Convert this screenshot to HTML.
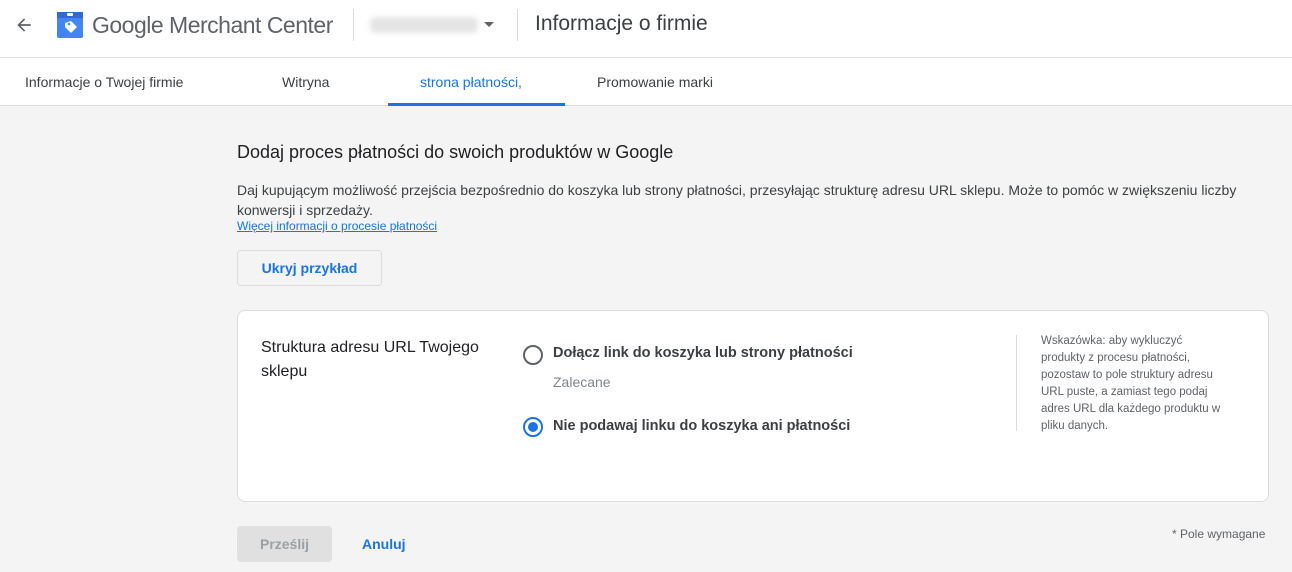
<!DOCTYPE html>
<html><head><meta charset="utf-8"><style>
*{margin:0;padding:0;box-sizing:border-box}
body{width:1292px;height:572px;overflow:hidden;background:#f4f4f4;font-family:"Liberation Sans",sans-serif;color:#202124;position:relative}
.abs{position:absolute}
.top{position:absolute;left:0;top:0;width:1292px;height:106px;background:#fff;border-bottom:1px solid #dadce0}
.sep1{position:absolute;left:0;top:57px;width:1292px;height:1px;background:#e0e0e0}
.tab{position:absolute;top:74px;font-size:14px;color:#3c4043}
</style></head><body>
<div class="top"></div>
<div class="sep1"></div>
<svg class="abs" style="left:14px;top:15px" width="20" height="20" viewBox="0 0 24 24"><path d="M20 11H7.8l5.6-5.6L12 4l-8 8 8 8 1.4-1.4L7.8 13H20z" fill="#5f6368"/></svg>
<svg class="abs" style="left:56px;top:11px" width="28" height="28" viewBox="0 0 28 28"><rect x="1" y="1" width="26" height="26" rx="2" fill="#4285f4"/><rect x="1" y="1" width="26" height="6" fill="#3367d6"/><rect x="11" y="2" width="6" height="3" rx="1" fill="#fff"/><path d="M9 12l6-2 6 6-6 6-6-6z" fill="#fff"/><circle cx="13" cy="13" r="1.3" fill="#4285f4"/></svg>
<div class="abs" style="left:92px;top:12px;font-size:23px;color:#5f6368;letter-spacing:-0.5px">Google Merchant Center</div>
<div class="abs" style="left:353px;top:9px;width:1px;height:32px;background:#dadce0"></div>
<div class="abs" style="left:370px;top:17px;width:108px;height:16px;background:#e4e4e4;border-radius:6px;filter:blur(3px)"></div>
<div class="abs" style="left:484px;top:22px;border-left:5px solid transparent;border-right:5px solid transparent;border-top:5px solid #5f6368"></div>
<div class="abs" style="left:517px;top:9px;width:1px;height:32px;background:#dadce0"></div>
<div class="abs" style="left:535px;top:12px;font-size:21px;color:#3c4043">Informacje o firmie</div>
<div class="tab" style="left:25px">Informacje o Twojej firmie</div>
<div class="tab" style="left:282px">Witryna</div>
<div class="tab" style="left:420px;color:#1a73e8">strona płatności,</div>
<div class="tab" style="left:597px">Promowanie marki</div>
<div class="abs" style="left:388px;top:103px;width:177px;height:3px;background:#1a73e8"></div>
<div class="abs" style="left:237px;top:142px;font-size:18px;color:#202124">Dodaj proces płatności do swoich produktów w Google</div>
<div class="abs" style="left:237px;top:180px;width:1040px;font-size:14px;line-height:20px;color:#3c4043">Daj kupującym możliwość przejścia bezpośrednio do koszyka lub strony płatności, przesyłając strukturę adresu URL sklepu. Może to pomóc w zwiększeniu liczby konwersji i sprzedaży.</div>
<div class="abs" style="left:237px;top:219px;font-size:12px;color:#1a73e8;text-decoration:underline">Więcej informacji o procesie płatności</div>
<div class="abs" style="left:237px;top:250px;width:145px;height:36px;border:1px solid #dadce0;border-radius:4px;background:#f4f4f4;font-size:14px;color:#1a73e8;text-align:center;line-height:34px;font-weight:bold">Ukryj przykład</div>
<div class="abs" style="left:237px;top:310px;width:1032px;height:192px;background:#fff;border:1px solid #dadce0;border-radius:8px"></div>
<div class="abs" style="left:261px;top:336px;font-size:16px;line-height:24px;width:250px">Struktura adresu URL Twojego sklepu</div>
<div class="abs" style="left:523px;top:345px;width:20px;height:20px;border:2px solid #5f6368;border-radius:50%"></div>
<div class="abs" style="left:553px;top:345px;font-size:14.5px;font-weight:bold;color:#3c4043">Dołącz link do koszyka lub strony płatności</div>
<div class="abs" style="left:553px;top:374px;font-size:14px;color:#80868b">Zalecane</div>
<div class="abs" style="left:523px;top:417px;width:20px;height:20px;border:2px solid #1a73e8;border-radius:50%"><div style="margin:3px;width:10px;height:10px;border-radius:50%;background:#1a73e8"></div></div>
<div class="abs" style="left:553px;top:418px;font-size:14.5px;font-weight:bold;color:#3c4043">Nie podawaj linku do koszyka ani płatności</div>
<div class="abs" style="left:1016px;top:335px;width:1px;height:96px;background:#dadce0"></div>
<div class="abs" style="left:1041px;top:333px;width:220px;font-size:11.5px;line-height:17px;color:#5f6368;white-space:nowrap">Wskazówka: aby wykluczyć<br>produkty z procesu płatności,<br>pozostaw to pole struktury adresu<br>URL puste, a zamiast tego podaj<br>adres URL dla każdego produktu w<br>pliku danych.</div>
<div class="abs" style="left:237px;top:526px;width:95px;height:36px;border-radius:4px;background:#e0e0e0;font-size:14px;color:#9aa0a6;text-align:center;line-height:36px;font-weight:bold">Prześlij</div>
<div class="abs" style="left:362px;top:536px;font-size:14px;color:#1a73e8;font-weight:bold">Anuluj</div>
<div class="abs" style="left:1172px;top:527px;font-size:12px;color:#5f6368">* Pole wymagane</div>
</body></html>
